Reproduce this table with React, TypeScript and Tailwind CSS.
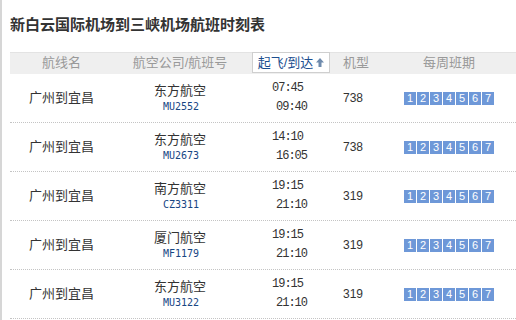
import React from 'react';

type Flight = {
  airline: string;
  code: string;
  dep: string;
  arr: string;
  plane: string;
};

const flights: Flight[] = [
  { airline: '东方航空', code: 'MU2552', dep: '07:45', arr: '09:40', plane: '738' },
  { airline: '东方航空', code: 'MU2673', dep: '14:10', arr: '16:05', plane: '738' },
  { airline: '南方航空', code: 'CZ3311', dep: '19:15', arr: '21:10', plane: '319' },
  { airline: '厦门航空', code: 'MF1179', dep: '19:15', arr: '21:10', plane: '319' },
  { airline: '东方航空', code: 'MU3122', dep: '19:15', arr: '21:10', plane: '319' },
];

const cjk = "font-['Liberation_Sans','Noto_Sans_CJK_SC',sans-serif]";

function UpArrow() {
  return (
    <svg width="8" height="9" viewBox="0 0 8 9" className="ml-[3px]">
      <path d="M4 0 L8 4.5 L5.5 4.5 L5.5 9 L2.5 9 L2.5 4.5 L0 4.5 Z" fill="#6f8bad" />
    </svg>
  );
}

function Days() {
  return (
    <div className="flex gap-[1px]">
      {[1, 2, 3, 4, 5, 6, 7].map(d => (
        <span
          key={d}
          className="w-[12px] h-[13px] bg-[#6e98d8] text-white text-[11px] leading-[13px] text-center font-['Liberation_Sans',sans-serif]"
        >
          {d}
        </span>
      ))}
    </div>
  );
}

export default function App() {
  return (
    <div className={`w-[516px] h-[320px] overflow-hidden bg-white border-l-2 border-[#d6d6d6] pl-[8px] ${cjk}`}>
      {/* Title */}
      <div className="h-[52px] flex items-center pb-[2px] text-[15px] font-bold text-[#333]">
        新白云国际机场到三峡机场航班时刻表
      </div>

      {/* Header */}
      <div className="h-[22px] bg-[#efefef] border-t border-[#e3e3e3] grid grid-cols-[103px_134px_88px_60px_108px_1fr] text-[13px] text-[#999] leading-[20px]">
        <div className="text-center">航线名</div>
        <div className="text-center">航空公司/航班号</div>
        <div className="flex justify-center">
          <div className="w-[78px] h-[21px] -mt-[1px] bg-white border border-[#cfcfcf] flex items-center justify-center text-[#1b4e8f]">
            起飞/到达
            <UpArrow />
          </div>
        </div>
        <div className="pl-[8px]">机型</div>
        <div className="text-center">每周班期</div>
        <div />
      </div>

      {/* Rows */}
      {flights.map((f, i) => (
        <div
          key={i}
          className="h-[49px] border-b border-dotted border-[#c4c4c4] grid grid-cols-[103px_134px_88px_60px_108px_1fr] items-center text-[#333]"
        >
          <div className="text-center text-[13px]">广州到宜昌</div>
          <div className="flex flex-col items-center">
            <span className="text-[13px] leading-[18px]">{f.airline}</span>
            <span className="text-[10px] leading-[14px] pl-[2px] text-[#174684] font-medium font-['DejaVu_Sans_Mono',monospace]">
              {f.code}
            </span>
          </div>
          <div className="flex flex-col pl-[25px] text-[12px] leading-[19px] tracking-[-1px] font-['Liberation_Mono',monospace]">
            <span>{f.dep}</span>
            <span className="pl-[4px]">{f.arr}</span>
          </div>
          <div className="pl-[8px] text-[12px] font-['Liberation_Sans',sans-serif]">{f.plane}</div>
          <div className="flex justify-center">
            <Days />
          </div>
          <div />
        </div>
      ))}
    </div>
  );
}
